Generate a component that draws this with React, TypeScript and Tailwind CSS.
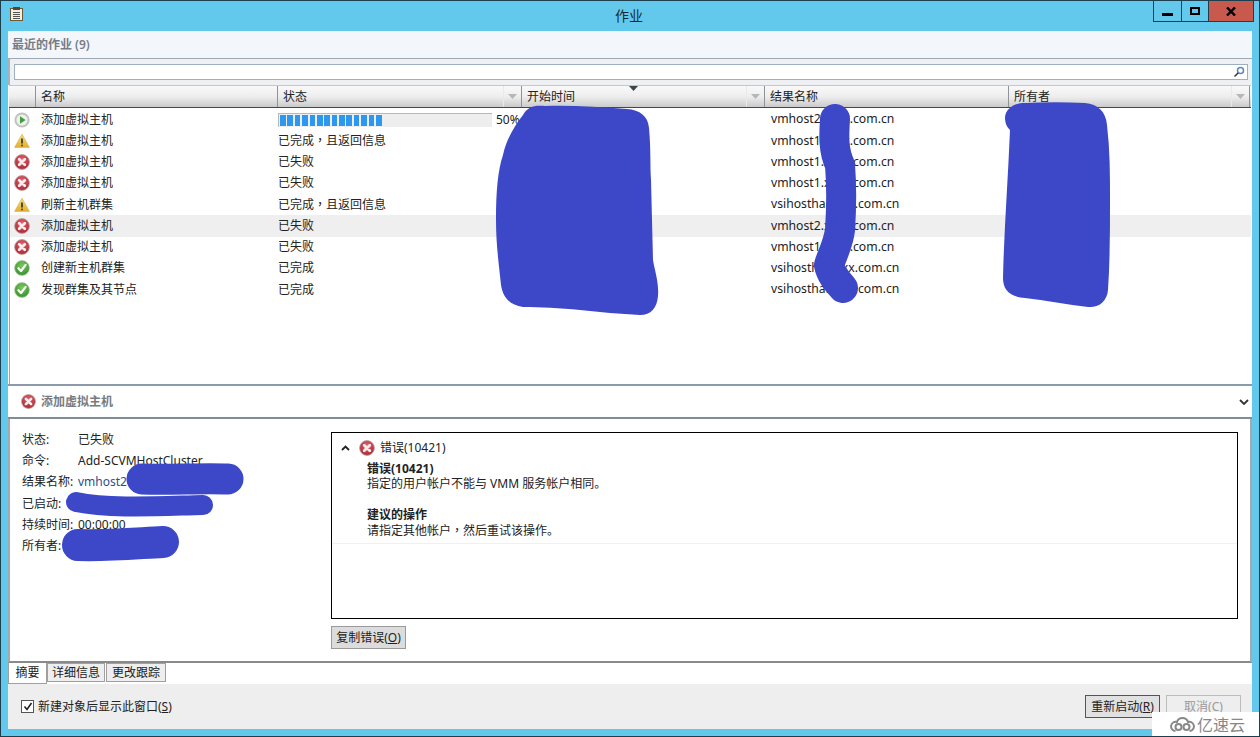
const font = { fontFamily: '"Noto Sans", "Noto Sans CJK SC", sans-serif' };

function ErrIcon({ size = 16 }: { size?: number }) {
  return (
    <svg width={size} height={size} viewBox="0 0 16 16" className="shrink-0">
      <defs>
        <radialGradient id="eg" cx="50%" cy="35%" r="70%">
          <stop offset="0%" stopColor="#e8636d" />
          <stop offset="100%" stopColor="#a5202b" />
        </radialGradient>
      </defs>
      <circle cx="8" cy="8" r="7.4" fill="url(#eg)" stroke="#b9a4a4" strokeWidth="0.9" />
      <path d="M5.2 5.2 10.8 10.8M10.8 5.2 5.2 10.8" stroke="#f6eeee" strokeWidth="2.8" strokeLinecap="round" />
    </svg>
  );
}
function WarnIcon() {
  return (
    <svg width="16" height="16" viewBox="0 0 16 16" className="shrink-0">
      <defs>
        <linearGradient id="wg" x1="0" y1="0" x2="0" y2="1">
          <stop offset="0%" stopColor="#f7e07a" />
          <stop offset="100%" stopColor="#e2b02c" />
        </linearGradient>
      </defs>
      <path d="M8 1.2 15.4 14.4H.6Z" fill="url(#wg)" stroke="#d2b45a" strokeWidth="0.7" strokeLinejoin="round" />
      <path d="M8 5.5V10.5" stroke="#3a3320" strokeWidth="1.7" />
      <circle cx="8" cy="12.4" r="0.9" fill="#3a3320" />
    </svg>
  );
}
function OkIcon() {
  return (
    <svg width="16" height="16" viewBox="0 0 16 16" className="shrink-0">
      <defs>
        <radialGradient id="og" cx="50%" cy="35%" r="70%">
          <stop offset="0%" stopColor="#7cc95c" />
          <stop offset="100%" stopColor="#2f8a2c" />
        </radialGradient>
      </defs>
      <circle cx="8" cy="8" r="7.4" fill="url(#og)" stroke="#a9c8a0" strokeWidth="0.8" />
      <path d="M4.4 8.2 7 11 11.6 4.8" fill="none" stroke="#fff" strokeWidth="2.2" strokeLinecap="round" strokeLinejoin="round" />
    </svg>
  );
}
function RunIcon() {
  return (
    <svg width="16" height="16" viewBox="0 0 16 16" className="shrink-0">
      <circle cx="8" cy="8" r="6.6" fill="#eef1ec" stroke="#c0c3be" strokeWidth="2" />
      <path d="M6 4.2 11.6 8 6 11.8Z" fill="#3f9e3c" />
    </svg>
  );
}

type Kind = "run" | "warn" | "err" | "ok";
const rows: { k: Kind; name: string; status: string; result: string; sel?: boolean }[] = [
  { k: "run", name: "添加虚拟主机", status: "", result: "vmhost2.xxxx.com.cn" },
  { k: "warn", name: "添加虚拟主机", status: "已完成，且返回信息", result: "vmhost1.xxxx.com.cn" },
  { k: "err", name: "添加虚拟主机", status: "已失败", result: "vmhost1.xxxx.com.cn" },
  { k: "err", name: "添加虚拟主机", status: "已失败", result: "vmhost1.xxxx.com.cn" },
  { k: "warn", name: "刷新主机群集", status: "已完成，且返回信息", result: "vsihostha.xxxx.com.cn" },
  { k: "err", name: "添加虚拟主机", status: "已失败", result: "vmhost2.xxxx.com.cn", sel: true },
  { k: "err", name: "添加虚拟主机", status: "已失败", result: "vmhost1.xxxx.com.cn" },
  { k: "ok", name: "创建新主机群集", status: "已完成", result: "vsihostha.xxxx.com.cn" },
  { k: "ok", name: "发现群集及其节点", status: "已完成", result: "vsihostha.xxxx.com.cn" },
];

function Icon({ k }: { k: Kind }) {
  if (k === "run") return <RunIcon />;
  if (k === "warn") return <WarnIcon />;
  if (k === "ok") return <OkIcon />;
  return <ErrIcon />;
}

function Comma() {
  return <span className="font-['Noto_Sans_CJK_TC']">，</span>;
}

function Status({ text }: { text: string }) {
  const parts = text.split("，");
  if (parts.length < 2) return <>{text}</>;
  return (
    <>
      {parts[0]}
      <Comma />
      {parts[1]}
    </>
  );
}

function Header({ label, w, arrow = true, sort = false }: { label: string; w: string; arrow?: boolean; sort?: boolean }) {
  return (
    <div className={`relative flex items-center h-full border-r border-[#8f9296] pl-[5px] ${w}`}>
      <span>{label}</span>
      {arrow && (
        <span className="absolute right-0 top-0 bottom-0 w-[18px] border-l border-[#e9e9e9] flex items-center justify-center">
          <svg width="9" height="5" viewBox="0 0 9 5"><path d="M0 0H9L4.5 5Z" fill="#b5b7b9" /></svg>
        </span>
      )}
      {sort && (
        <svg width="9" height="5" viewBox="0 0 9 5" className="absolute top-0 left-[107px]"><path d="M0 0H9L4.5 5Z" fill="#3c4548" /></svg>
      )}
    </div>
  );
}

export default function App() {
  return (
    <div style={font} className="relative w-[1260px] h-[737px] overflow-hidden bg-[#62c9ec] border border-[#1c3f4f] text-[12px] text-[#222] flex flex-col">
      {/* title bar */}
      <div className="relative h-[30px] shrink-0 flex items-center justify-center text-[14px] text-[#1a2a30]">
        <svg width="13" height="14" viewBox="0 0 13 14" className="absolute left-[9px] top-[6px]">
          <rect x="0.5" y="1.5" width="12" height="12" fill="#f5f0dc" stroke="#6b5a3a" />
          <rect x="3" y="0" width="7" height="3" fill="#4a4a3a" />
          <path d="M3 5.5H10M3 7.5H10M3 9.5H10M3 11.5H10" stroke="#555" />
        </svg>
        <span className="relative top-[-1px] left-[-1px]">作业</span>
        <div className="absolute right-[5px] top-0 flex h-[21px] border-l border-b border-[#1c3f4f]">
          <div className="w-[28px] border-r border-[#1c3f4f] flex items-end justify-center pb-[5px]">
            <div className="w-[11px] h-[3px] bg-black" />
          </div>
          <div className="w-[26px] flex items-center justify-center">
            <div className="w-[10px] h-[8px] border-2 border-black" />
          </div>
          <div className="w-[46px] bg-[#c75a4c] flex items-center justify-center border-l border-[#1c3f4f] border-r">
            <svg width="10" height="9" viewBox="0 0 10 9"><path d="M1 .5 9 8.5M9 .5 1 8.5" stroke="#000" strokeWidth="2.4" /></svg>
          </div>
        </div>
      </div>

      {/* body */}
      <div className="mx-[7px] w-[1244px] h-[698px] flex flex-col bg-white">
        <div className="h-[27px] shrink-0 bg-[#f3f6fb] flex items-center pl-[4px] font-semibold text-[#767c87]">最近的作业 (9)</div>
        <div className="h-[27px] shrink-0 bg-[#eef0f3] border-t border-[#9fa9b3] px-[4px] pt-[5px] border-l-2 border-l-[#a9b2bb]">
          <div className="h-[16px] bg-white border border-[#9db0bf] flex justify-end items-center pr-[2px]">
            <svg width="12" height="12" viewBox="0 0 12 12"><circle cx="7.5" cy="4.5" r="3" fill="none" stroke="#5d86b8" strokeWidth="1.5" /><path d="M5.3 6.7 1.5 10.5" stroke="#333" strokeWidth="1.5" /></svg>
          </div>
        </div>
        {/* column header */}
        <div className="h-[23px] shrink-0 flex border-y border-t-[#c3c7cb] border-b-[#44484c] mx-[1px] bg-gradient-to-b from-[#f9f9f9] via-[#eeeeee] to-[#cbcbcb]">
          <div className="w-[27px] border-r border-[#8f9296] h-full" />
          <Header label="名称" w="w-[242px]" arrow={false} />
          <Header label="状态" w="w-[244px]" />
          <Header label="开始时间" w="w-[243px]" sort />
          <Header label="结果名称" w="w-[244px]" arrow={false} />
          <Header label="所有者" w="w-[241px]" />
        </div>
        {/* rows */}
        <div className="h-[276px] shrink-0 flex flex-col pt-[1px] border-l border-[#9aa5ae] mx-[1px]">
          {rows.map((r, i) => (
            <div key={i} className={`h-[21.25px] shrink-0 flex items-center ${r.sel ? "bg-[#efefef]" : ""}`}>
              <div className="w-[27px] flex justify-center pr-[3px]"><Icon k={r.k} /></div>
              <div className="w-[241px] pl-[4px] whitespace-nowrap">{r.name}</div>
              <div className="w-[245px] whitespace-nowrap flex items-center">
                {r.k === "run" ? (
                  <>
                    <div className="w-[214px] h-[14px] bg-[#eeeeee] border-l border-t border-[#b8b8b8] flex gap-[1.7px] pl-[1px] py-[1px] shrink-0">
                      {Array.from({ length: 14 }).map((_, j) => (
                        <div key={j} className="w-[5.7px] h-full bg-[#2e97ef]" />
                      ))}
                    </div>
                    <span className="ml-[4px]">50%</span>
                  </>
                ) : (
                  <span><Status text={r.status} /></span>
                )}
              </div>
              <div className="w-[243px]" />
              <div className="w-[244px] pl-[5px] whitespace-nowrap text-[12.2px]">{r.result}</div>
              <div className="flex-1" />
            </div>
          ))}
        </div>
        {/* section heading */}
        <div className="h-[35px] shrink-0 border-y-[2px] border-t-[#8b9bab] border-b-[#7f8d9b] flex items-center pl-[13px] gap-[5px] font-semibold text-[#777b81] relative">
          <ErrIcon size={15} />
          <span>添加虚拟主机</span>
          <svg width="10" height="6" viewBox="0 0 10 6" className="absolute right-[3px] top-[13px]"><path d="M1 1 5 5 9 1" fill="none" stroke="#333" strokeWidth="1.8" /></svg>
        </div>
        {/* details */}
        <div className="h-[244px] shrink-0 flex border-x-2 border-x-[#a4aab0] border-b-2 border-b-[#8a8a8a]">
          <div className="w-[321px] shrink-0 pl-[12px] pt-[10px]">
            {[
              ["状态:", "已失败"],
              ["命令:", "Add-SCVMHostCluster"],
              ["结果名称:", "vmhost2"],
              ["已启动:", ""],
              ["持续时间:", "00:00:00"],
              ["所有者:", ""],
            ].map(([l, v], i) => (
              <div key={i} className="h-[21.3px] flex items-center whitespace-nowrap">
                <span className="w-[56px] shrink-0">{l}</span>
                <span className={i === 2 ? "text-[#2a4f8f]" : ""}>{v}</span>
              </div>
            ))}
          </div>
          <div className="flex-1 pt-[13px] pr-[12px]">
            <div className="h-[187px] border border-black flex flex-col">
              <div className="h-[111px] border-b border-[#f0f0f0]">
                <div className="h-[28px] flex items-center pl-[9px] pt-[2px] gap-[9px]">
                  <svg width="9" height="6" viewBox="0 0 9 6"><path d="M1 5 4.5 1.5 8 5" fill="none" stroke="#222" strokeWidth="1.8" /></svg>
                  <div className="flex items-center gap-[5px]"><ErrIcon /><span>错误(10421)</span></div>
                </div>
                <div className="pl-[35px] leading-[15px]">
                  <div className="font-bold">错误(10421)</div>
                  <div>指定的用户帐户不能与 VMM 服务帐户相同。</div>
                  <div className="h-[16px]" />
                  <div className="font-bold">建议的操作</div>
                  <div>请指定其他帐户<Comma />然后重试该操作。</div>
                </div>
              </div>
            </div>
            <div className="mt-[7px] w-[75px] h-[23px] bg-[#dcdcdc] border border-[#9a9a9a] flex items-center justify-center whitespace-nowrap">
              复制错误(<span className="underline">O</span>)
            </div>
          </div>
        </div>
        {/* tabs */}
        <div className="h-[21px] shrink-0 flex items-stretch">
          <div className="w-[39px] h-[21px] bg-white border-x border-b border-[#a0a0a0] flex items-center justify-center">摘要</div>
          <div className="w-[58px] h-[19px] bg-[#eeeeee] border border-[#a0a0a0] flex items-center justify-center">详细信息</div>
          <div className="w-[60px] h-[19px] bg-[#eeeeee] border border-[#a0a0a0] flex items-center justify-center ml-[1px]">更改跟踪</div>
        </div>
        {/* footer */}
        <div className="flex-1 bg-[#eeeeee] flex items-center justify-between pl-[13px] pr-[11px]">
          <div className="flex items-center gap-[4px]">
            <div className="w-[13px] h-[13px] bg-white border border-[#555] flex items-center justify-center">
              <svg width="10" height="9" viewBox="0 0 10 9"><path d="M1.5 4.5 4 7.5 8.5 1" fill="none" stroke="#222" strokeWidth="1.6" /></svg>
            </div>
            <span>新建对象后显示此窗口(<span className="underline">S</span>)</span>
          </div>
          <div className="flex gap-[6px]">
            <div className="w-[75px] h-[23px] bg-[#e1e1e1] border border-[#555] flex items-center justify-center whitespace-nowrap">
              重新启动(<span className="underline">R</span>)
            </div>
            <div className="w-[75px] h-[23px] border border-[#bcbcbc] flex items-center justify-center text-[#9a9a9a] whitespace-nowrap">
              取消(C)
            </div>
          </div>
        </div>
      </div>

      {/* redaction scribbles lying over the content */}
      <svg width="1260" height="737" className="absolute left-[-1px] top-[-1px] pointer-events-none">
        <path
          fill="#3d48c9"
          d="M523 115C528 106 535 105 545 106C570 105 600 107 627 109C640 110 648 116 649 128C651 150 650 165 651 180L653 260C655 272 659 282 658 296C657 308 651 315 640 315C620 314 600 312 580 310C560 308 540 307 523 307C510 305 503 298 501 285C499 265 496 245 496 220C496 190 498 170 503 155C506 140 515 125 523 115Z"
        />
        <path
          fill="none"
          stroke="#3d48c9"
          strokeWidth="30"
          strokeLinecap="round"
          strokeLinejoin="round"
          d="M835 119C834 135 833 150 840 165C842 190 841 215 840 230C838 245 832 255 829 265C831 275 838 282 843 288"
        />
        <path
          fill="#3d48c9"
          d="M1005 117C1006 108 1015 103 1025 103C1045 102 1065 102 1085 103C1098 104 1106 112 1107 125C1110 150 1110 175 1110 200C1110 230 1110 260 1108 290C1107 302 1098 308 1088 307C1068 305 1045 300 1025 298C1010 297 1003 290 1003 278C1004 230 1008 180 1010 130C1006 126 1005 122 1005 117Z"
        />
        <g fill="none" stroke="#3d48c9" strokeLinecap="round" strokeLinejoin="round">
          <path strokeWidth="31" d="M142 479C170 480 200 478 228 479" />
          <path strokeWidth="20" d="M76 502C110 509 160 506 203 505" />
          <path strokeWidth="32" d="M78 545C110 546 140 543 163 542" />
        </g>
      </svg>

      {/* watermark */}
      <div className="absolute right-[-1px] bottom-[-1px] w-[108px] h-[25px] bg-white flex items-center pl-[18px] gap-[2px] text-[16px] text-[#888]">
        <svg width="25" height="17" viewBox="0 0 25 17">
          <path d="M5.5 15A4.6 4.6 0 1 1 7 6 5.8 5.8 0 0 1 18 6 4.6 4.6 0 1 1 19.5 15" fill="none" stroke="#888" strokeWidth="2" />
          <circle cx="8.5" cy="11" r="3" fill="none" stroke="#888" strokeWidth="2" />
          <circle cx="16.5" cy="11" r="3" fill="none" stroke="#888" strokeWidth="2" />
        </svg>
        <span>亿速云</span>
      </div>
    </div>
  );
}
